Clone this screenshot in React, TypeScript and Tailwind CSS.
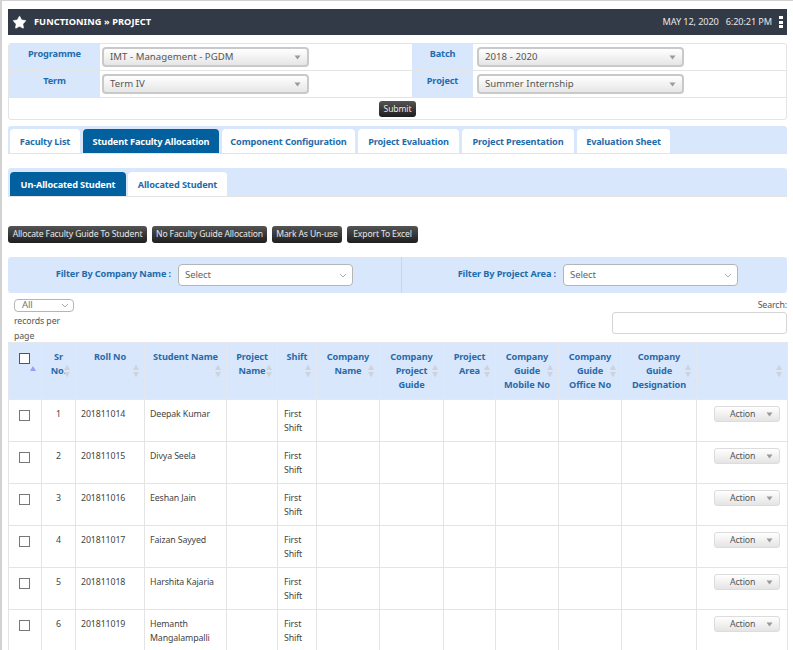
import { Star } from 'lucide-react'

const font = "[font-family:'DejaVu_Sans',sans-serif] font-stretch-condensed"

const columns = [
  { label: ['', ''], width: 33 },
  { label: ['Sr', 'No.'], width: 34 },
  { label: ['Roll No'], width: 69 },
  { label: ['Student Name'], width: 82 },
  { label: ['Project', 'Name'], width: 51 },
  { label: ['Shift'], width: 39 },
  { label: ['Company', 'Name'], width: 63 },
  { label: ['Company', 'Project', 'Guide'], width: 64 },
  { label: ['Project', 'Area'], width: 52 },
  { label: ['Company', 'Guide', 'Mobile No'], width: 63 },
  { label: ['Company', 'Guide', 'Office No'], width: 63 },
  { label: ['Company', 'Guide', 'Designation'], width: 75 },
  { label: [''], width: 91 },
]

const students = [
  { no: 1, roll: '201811014', name: ['Deepak Kumar'] },
  { no: 2, roll: '201811015', name: ['Divya Seela'] },
  { no: 3, roll: '201811016', name: ['Eeshan Jain'] },
  { no: 4, roll: '201811017', name: ['Faizan Sayyed'] },
  { no: 5, roll: '201811018', name: ['Harshita Kajaria'] },
  { no: 6, roll: '201811019', name: ['Hemanth', 'Mangalampalli'] },
]

const DarkButton = ({ children, className = '' }: { children: React.ReactNode; className?: string }) => (
  <button className={`flex items-center justify-center whitespace-nowrap rounded-[3px] bg-linear-to-b from-[#555555] to-[#1e1e1e] text-[8.6px] tracking-[-0.14px] text-[#e8e8e8] ${className}`}>
    {children}
  </button>
)

const GraySelect = ({ value }: { value: string }) => (
  <div className="flex h-[20px] w-[207px] items-center justify-between rounded-[4px] border-2 border-[#c9c9c9] bg-linear-to-b from-white to-[#e6e6e6] pl-[6px] pr-[6px] pt-px text-[9.6px] tracking-[0.05px] text-[#555555]">
    <span>{value}</span>
    <Caret />
  </div>
)

const Caret = () => (
  <svg width="7" height="5" viewBox="0 0 7 5"><path d="M0.5 0.5h6L3.5 4.5z" fill="#9a9a9a" /></svg>
)

const Chevron = () => (
  <svg width="8" height="5" viewBox="0 0 8 5" fill="none"><path d="M1 1l3 3 3-3" stroke="#9a9a9a" strokeWidth="0.8" /></svg>
)

const WhiteSelect = ({ className = '' }: { className?: string }) => (
  <div className={`flex h-[22px] w-[175px] items-center justify-between rounded-[4px] border border-[#b5b5b5] bg-white pl-[6px] pr-[5px] pt-px text-[9.6px] text-[#666666] ${className}`}>
    <span>Select</span>
    <Chevron />
  </div>
)

const SortIcon = () => (
  <svg className="absolute right-[5px] top-1/2 -translate-y-1/2" width="6" height="13" viewBox="0 0 6 13">
    <path d="M3 0l3 5.5H0z M3 13l-3-5.5h6z" fill="#cdd3dc" />
  </svg>
)

const Tab = ({ label, active, className = '' }: { label: string; active?: boolean; className?: string }) => (
  <div
    className={`flex h-[24px] items-center justify-center whitespace-nowrap rounded-t-[4px] pt-[2px] text-[9.2px] font-bold tracking-[-0.14px] ${
      active ? 'bg-[#03609f] text-white' : 'bg-white text-[#1f6cab]'
    } ${className}`}
  >
    {label}
  </div>
)

const Check = ({ dark }: { dark?: boolean }) => (
  <div className={`mx-auto h-[11px] w-[11px] -translate-x-px border-[1.5px] bg-white ${dark ? 'border-[#555555]' : 'border-[#777777]'}`} />
)

export default function App() {
  return (
    <div className={`relative h-[650px] w-[793px] overflow-hidden border-l-2 border-t border-[#d2d2d2] bg-white pl-[6px] text-[8.8px] tracking-[-0.12px] text-[#444444] ${font}`}>
      {/* title bar */}
      <div className="mt-[8px] flex h-[26px] w-[779px] items-center bg-[#333a47] text-white">
        <Star className="ml-[4px] h-[15px] w-[15px]" fill="white" strokeWidth={1} />
        <span className="ml-[7px] text-[9.2px] font-bold tracking-[0.08px]">FUNCTIONING » PROJECT</span>
        <span className="ml-auto text-[9.2px] text-[#e6e6e6]">MAY 12, 2020</span>
        <span className="ml-[7px] text-[9.2px] text-[#e6e6e6]">6:20:21 PM</span>
        <div className="ml-[7px] mr-[4px] flex flex-col gap-[1.5px]">
          <i className="block h-[3px] w-[4px] bg-white" />
          <i className="block h-[3px] w-[4px] bg-white" />
          <i className="block h-[3px] w-[4px] bg-white" />
        </div>
      </div>

      {/* programme form */}
      <div className="mt-[8px] h-[77px] w-[779px] overflow-hidden rounded-[3px] border border-[#e4e4e4]">
        {[
          ['Programme', 'IMT - Management - PGDM', 'Batch', '2018 - 2020'],
          ['Term', 'Term IV', 'Project', 'Summer Internship'],
        ].map((row) => (
          <div key={row[0]} className="flex h-[27px] border-b border-[#e4e4e4]">
            <div className="w-[91px] bg-[#d9e7fd] pt-[3px] text-center text-[9.2px] font-bold text-[#1f6cab]">{row[0]}</div>
            <div className="w-[312px] pl-[2px] pt-[3px]">
              <GraySelect value={row[1]} />
            </div>
            <div className="w-[61px] bg-[#d9e7fd] pt-[3px] text-center text-[9.2px] font-bold text-[#1f6cab]">{row[2]}</div>
            <div className="pl-[4px] pt-[3px]">
              <GraySelect value={row[3]} />
            </div>
          </div>
        ))}
        <div className="flex justify-center pt-[3px]">
          <DarkButton className="h-[16px] w-[37px]">Submit</DarkButton>
        </div>
      </div>

      {/* main tabs */}
      <div className="mt-[6px] flex h-[28px] w-[779px] items-end gap-[3px] rounded-t-[3px] border-b border-[#e4e4e4] bg-[#d9e7fd] pl-[2px]">
        <Tab label="Faculty List" className="w-[70px]" />
        <Tab label="Student Faculty Allocation" active className="w-[136px]" />
        <Tab label="Component Configuration" className="w-[133px]" />
        <Tab label="Project Evaluation" className="w-[101px]" />
        <Tab label="Project Presentation" className="w-[112px]" />
        <Tab label="Evaluation Sheet" className="w-[93px]" />
      </div>

      {/* sub tabs */}
      <div className="mt-[14px] flex h-[29px] w-[779px] items-end gap-[2px] rounded-t-[3px] border-b border-[#e4e4e4] bg-[#d9e7fd] pl-[2px]">
        <Tab label="Un-Allocated Student" active className="w-[116px]" />
        <Tab label="Allocated Student" className="w-[99px]" />
      </div>

      {/* actions */}
      <div className="mt-[29px] flex gap-[5px]">
        <DarkButton className="h-[17px] w-[139px]">Allocate Faculty Guide To Student</DarkButton>
        <DarkButton className="h-[17px] w-[115px]">No Faculty Guide Allocation</DarkButton>
        <DarkButton className="h-[17px] w-[70px]">Mark As Un-use</DarkButton>
        <DarkButton className="h-[17px] w-[71px]">Export To Excel</DarkButton>
      </div>

      {/* filters */}
      <div className="mt-[14px] flex h-[36px] w-[779px] rounded-[3px] bg-[#d9e7fd]">
        <div className="flex w-[394px] items-center border-r border-[#c9d6ea]">
          <span className="w-[163px] pb-[3px] text-right text-[9.2px] font-bold text-[#1f6cab]">Filter By Company Name :</span>
          <WhiteSelect className="ml-[7px]" />
        </div>
        <div className="flex items-center">
          <span className="w-[154px] pb-[3px] text-right text-[9.2px] font-bold text-[#1f6cab]">Filter By Project Area :</span>
          <WhiteSelect className="ml-[7px]" />
        </div>
      </div>

      {/* table controls */}
      <div className="relative h-[49px] w-[779px] text-[#555555]">
        <div className="absolute left-[6px] top-[6px] flex h-[13px] w-[60px] items-center justify-between rounded-[4px] border border-[#b5b5b5] pl-[7px] pr-[4px] text-[9.6px] text-[#777777]">
          <span>All</span>
          <Chevron />
        </div>
        <div className="absolute left-[6px] top-[21px] w-[60px] leading-[15px]">records per page</div>
        <div className="absolute right-0 top-[6px] leading-[13px]">Search:</div>
        <div className="absolute right-0 top-[19px] h-[22px] w-[175px] rounded-[3px] border border-[#d5d5d5] bg-white" />
      </div>

      {/* students */}
      <table className="w-[779px] table-fixed border-collapse leading-[14.2px]">
        <colgroup>
          {columns.map((c, i) => (
            <col key={i} style={{ width: c.width }} />
          ))}
        </colgroup>
        <thead>
          <tr className="h-[57px] bg-[#d9e7fd]">
            {columns.map((c, i) => (
              <th key={i} className="relative border border-[#e4e8ee] px-[4px] pt-[7px] align-top text-[9.2px] font-bold tracking-[-0.1px] text-[#2a6aa8]">
                {i === 0 ? (
                  <>
                    <div className="mt-[3px]"><Check dark /></div>
                    <svg className="absolute left-[21px] top-[23px]" width="6" height="5" viewBox="0 0 6 5"><path d="M3 0l3 5H0z" fill="#9c9cf0" /></svg>
                  </>
                ) : (
                  <>
                    {c.label.map((l, j) => (
                      <div key={j}>{l}</div>
                    ))}
                    <SortIcon />
                  </>
                )}
              </th>
            ))}
          </tr>
        </thead>
        <tbody>
          {students.map((s) => (
            <tr key={s.no} className="h-[42px]">
              <td className="border border-[#e4e4e4] pt-[10px] align-top"><Check /></td>
              <td className="border border-[#e4e4e4] pt-[7px] text-center align-top">{s.no}</td>
              <td className="border border-[#e4e4e4] pl-[5px] pt-[7px] align-top">{s.roll}</td>
              <td className="border border-[#e4e4e4] pl-[5px] pt-[7px] align-top">
                {s.name.map((n) => (
                  <div key={n}>{n}</div>
                ))}
              </td>
              <td className="border border-[#e4e4e4]" />
              <td className="border border-[#e4e4e4] pl-[6px] pt-[7px] align-top">
                First
                <br />
                Shift
              </td>
              <td className="border border-[#e4e4e4]" />
              <td className="border border-[#e4e4e4]" />
              <td className="border border-[#e4e4e4]" />
              <td className="border border-[#e4e4e4]" />
              <td className="border border-[#e4e4e4]" />
              <td className="border border-[#e4e4e4]" />
              <td className="border border-[#e4e4e4] pl-[17px] pt-[6px] align-top">
                <div className="flex h-[16px] w-[66px] items-center justify-between rounded-[3px] border border-[#dcdcdc] bg-linear-to-b from-white to-[#e4e4e4] pl-[15px] pr-[6px] text-[#555555]">
                  <span>Action</span>
                  <Caret />
                </div>
              </td>
            </tr>
          ))}
        </tbody>
      </table>
    </div>
  )
}
